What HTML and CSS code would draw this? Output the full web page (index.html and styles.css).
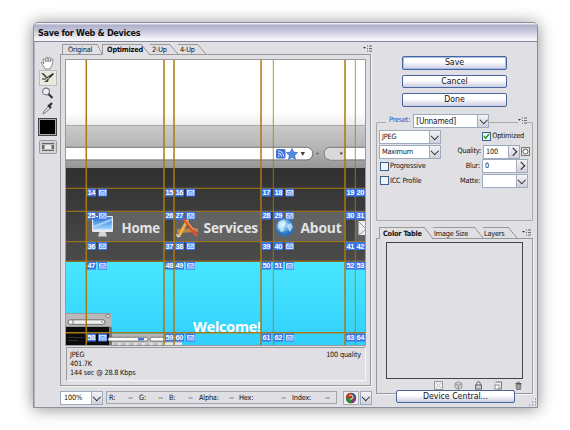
FILE: index.html
```html
<!DOCTYPE html>
<html lang="en">
<head>
  <meta charset="UTF-8" />
  <title>Save for Web &amp; Devices</title>
  <link rel="stylesheet" href="styles.css">
</head>
<body>

<div class="window">
  <div class="titlebar">Save for Web &amp; Devices</div>

  <div class="content">
    <!-- Toolbox -->
    <div class="tools">
      <svg class="tool" width="16" height="14" viewBox="0 0 16 14"><path d="M5 13L3 9 1 7q0-1 1.500-.5L4 8 3 3q1-1 2 .5L6 6 6 1.500q1-1 1.700 0L8 6 9 1.500q1-.8 1.600.3L10 6 12 3q1.400-.3 1 1L12 9l-2 4z" fill="#fff" stroke="#777" stroke-width=".8"/></svg>
      <svg class="tool active" width="16" height="14" viewBox="0 0 16 14"><path d="M1 2l3 .5L7 6l6-4 1 1-5 4-1 4H4l3-3z" fill="#444"/><path d="M2 8h4M9 7l4-4" stroke="#222" stroke-width="1.200"/><path d="M5 10l4-4" stroke="#eee" stroke-width=".8"/></svg>
      <svg class="tool" width="16" height="14" viewBox="0 0 16 14"><circle cx="6" cy="5.500" r="3.400" fill="#eef" stroke="#777" stroke-width="1.100"/><path d="M8.500 8l4 4" stroke="#333" stroke-width="2.200"/></svg>
      <svg class="tool" width="16" height="14" viewBox="0 0 16 14"><path d="M3 13l1-3 5-5 2 2-5 4z" fill="#ddd" stroke="#666" stroke-width=".8"/><path d="M8 4l3 3M9 5l3-3" stroke="#333" stroke-width="2.400"/></svg>
      <div class="swatch"></div>
      <svg class="slice-toggle" width="18" height="14" viewBox="0 0 18 14"><rect x=".5" y=".5" width="17" height="13" rx="1" fill="#d2d2d2" stroke="#999"/><rect x="3" y="3" width="12" height="8" fill="#666"/><rect x="5.500" y="5" width="7" height="4" fill="#eee"/><path d="M3 4.500h12M3 9.500h12" stroke="#ddd" stroke-width=".7"/></svg>
    </div>

    <!-- Preview -->
    <div class="preview">
      <div class="tabs">
        <span class="tab tab-original">Original</span>
        <span class="tab tab-optimized selected">Optimized</span>
        <span class="tab tab-up">2-Up</span>
        <span class="tab tab-up">4-Up</span>
        <svg class="menu-icon" width="9" height="7" viewBox="0 0 9 7"><path d="M0 2h3L1.500 3.800z" fill="#333"/><path d="M4 1h1M6 1h3M4 3.500h1M6 3.500h3M4 6h1M6 6h3" stroke="#666"/></svg>
      </div>
      <div class="preview-panel">
        <svg class="canvas" width="299" height="285" viewBox="66 60 299 285">
          <defs>
            <linearGradient id="fade" x2="0" y2="1"><stop stop-color="#fff"/><stop offset="1" stop-color="#ececec"/></linearGradient>
            <linearGradient id="chrome" x2="0" y2="1"><stop stop-color="#cacaca"/><stop offset=".5" stop-color="#b5b5b5"/><stop offset="1" stop-color="#969696"/></linearGradient>
            <linearGradient id="dark" x2="0" y2="1"><stop stop-color="#303030"/><stop offset="1" stop-color="#4b4b4b"/></linearGradient>
            <linearGradient id="cyan" x2="0" y2="1"><stop stop-color="#48e6ff"/><stop offset="1" stop-color="#32cffc"/></linearGradient>
            <linearGradient id="screen" x2="0" y2="1"><stop stop-color="#276fd1"/><stop offset="1" stop-color="#9bd6ff"/></linearGradient>
            <radialGradient id="globe" cx=".4" cy=".35"><stop stop-color="#e5f7ff"/><stop offset=".5" stop-color="#75bdec"/><stop offset="1" stop-color="#2474bd"/></radialGradient>
            <g id="slice-icon"><rect width="9" height="8" fill="#3b74e8"/><rect x="1.500" y="2" width="6.500" height="4.500" fill="#6d9bf5" stroke="#dce8ff" stroke-width=".9"/><path d="M2 3l2.500 2L7.500 3" fill="none" stroke="#fff" stroke-width=".8"/></g>
          </defs>

          <!-- browser chrome -->
          <rect x="66" y="60" width="299" height="285" fill="#fff"/>
          <rect x="66" y="112" width="299" height="14" fill="url(#fade)"/>
          <rect x="66" y="126" width="299" height="42" fill="url(#chrome)"/>
          <path d="M66 125.500h299" stroke="#aaa"/>
          <path d="M60 147.300h246.500a6.300 6.300 0 0 1 0 12.600H60z" fill="#fff" stroke="#666" stroke-width=".9"/>
          <path d="M370 147.300h-39.500a6.300 6.300 0 0 0 0 12.600H370z" fill="#fff" stroke="#666" stroke-width=".9"/>
          <path d="M330.500 148h14.500v11.500h-14.500a5.700 5.700 0 0 1 0-11.500z" fill="#d9d9d9"/>
          <rect x="276" y="149" width="9.500" height="9.500" rx="1.500" fill="#4470dc"/>
          <path d="M278 153a3.500 3.500 0 0 1 3.500 3.500M278 150.800a5.700 5.700 0 0 1 5.700 5.700" fill="none" stroke="#dfe9ff" stroke-width="1"/>
          <circle cx="278.800" cy="155.900" r=".8" fill="#dfe9ff"/>
          <path d="M292 148.500l1.700 3.600 4 .5-3 2.800.8 4-3.500-2-3.500 2 .8-4-3-2.800 4-.5z" fill="#4f8be0" stroke="#2b62c2" stroke-width=".6"/>
          <path d="M300.500 152h4.500l-2.250 4zM339.500 152.500h3.500l-1.750 2.500z" fill="#444"/>
          <circle cx="317.500" cy="153.500" r=".9" fill="#555"/>

          <!-- navigation -->
          <rect x="66" y="168" width="299" height="94" fill="url(#dark)"/>
          <path d="M86 211.500h78v30H86zM174 211.500h87v30h-87zM273 211.500h72v30h-72zM355 211.500h10v30h-10z" fill="#626262"/>
          <g>
            <rect x="92" y="216" width="21" height="16" rx="1" fill="#e6e9ed"/>
            <rect x="93.200" y="217.200" width="18.600" height="12" fill="url(#screen)"/>
            <path d="M93.200 226l18.600-8v3l-18.600 7z" fill="#c7e8ff" opacity=".6"/>
            <path d="M99.500 232h6l1.500 4.500h-9z" fill="#d2d5d9"/>
          </g>
          <g fill="none">
            <path d="M177 231l21-1" stroke="#bd8443" stroke-width="4"/>
            <path d="M179 236l9-17" stroke="#e7b14b" stroke-width="3"/>
            <path d="M184 219l13 17" stroke="#dc5130" stroke-width="3"/>
            <path d="M186 220l8 10" stroke="#f6c18c" stroke-width="1"/>
            <path d="M177 234q0 4 3 2" stroke="#ddd" stroke-width="1.500"/>
          </g>
          <circle cx="285" cy="227.500" r="9" fill="url(#globe)"/>
          <path d="M279 222l5-2 2 3-3 4 1 4-3 1-3-5zM287 225l4-2 2 4-3 5-2-3z" fill="#e3f6ff" opacity=".65"/>
          <rect x="358.500" y="221" width="11" height="14" fill="#eee"/>
          <path d="M359 222l7 7-7 6" fill="none" stroke="#999"/>
          <g class="nav-text">
            <text x="121.500" y="232.500" textLength="38.500" lengthAdjust="spacingAndGlyphs">Home</text>
            <text x="203.500" y="232.500" textLength="54.500" lengthAdjust="spacingAndGlyphs">Services</text>
            <text x="300.500" y="232.500" textLength="41" lengthAdjust="spacingAndGlyphs">About</text>
          </g>

          <!-- page body -->
          <rect x="66" y="262" width="299" height="83" fill="url(#cyan)"/>
          <text class="welcome" x="193" y="332.200" textLength="68" lengthAdjust="spacingAndGlyphs">Welcome!</text>
          <rect x="66" y="313" width="45.500" height="14" fill="#b9b9b9"/>
          <path d="M66 313.500h45M66 326.500h45" stroke="#999"/>
          <rect x="68" y="319.800" width="37" height="4.600" rx="2.300" fill="#eee" stroke="#555" stroke-width=".8"/>
          <path d="M73 320v4M101 321l2 2" stroke="#555" stroke-width=".7"/>
          <ellipse cx="108" cy="316" rx="2.600" ry="1.500" fill="#ddd" stroke="#666" stroke-width=".7"/>
          <rect x="66" y="327" width="43" height="18" fill="#0b0b0b"/>
          <rect x="109" y="327" width="3" height="18" fill="#777"/>
          <path d="M68 337.500h16M68 340.500h10" stroke="#333" stroke-width="1.200"/>
          <rect x="112" y="334" width="70" height="9" fill="#b4b4b4"/>
          <rect x="112" y="342.500" width="70" height="2.500" fill="#e5e5e5"/>
          <rect x="108" y="337.300" width="40" height="3.800" rx="1.900" fill="#fff" stroke="#555" stroke-width=".7"/>
          <rect x="150" y="337.300" width="20" height="3.800" rx="1.900" fill="#fff" stroke="#555" stroke-width=".7"/>
          <path d="M138 339.200h6" stroke="#456fdb" stroke-width="2.400"/>
          <path d="M113 344h50" stroke="#888" stroke-width=".8" stroke-dasharray="5 3"/>

          <!-- slice guides -->
          <g stroke="#a87a14" fill="none">
            <path d="M86.300 60v285M164 60v285M174 60v285M261 60v285M345 60v285" stroke-width="1.500"/>
            <path d="M273.300 60v285M355.300 60v285" stroke-width="1" opacity=".8"/>
            <path d="M66 188.300h299M66 211.300h299M66 241.700h299M66 261.200h299" stroke-width="1"/>
            <path d="M66 332.700h299" stroke-width="1.500"/>
          </g>
          <g id="slices"></g>
        </svg>
        <div class="info">
          <div>JPEG<br>401.7K<br>144 sec @ 28.8 Kbps</div>
          <div>100 quality</div>
        </div>
      </div>
      <div class="status">
        <div class="select zoom"><span>100%</span><i class="arrow"></i></div>
        <div class="readout">
          <span class="r-short">R:<b>--</b></span>
          <span class="r-short">G:<b>--</b></span>
          <span class="r-short">B:<b>--</b></span>
          <span class="r-alpha">Alpha:<b>--</b></span>
          <span class="r-hex">Hex:<b>--</b></span>
          <span class="r-index">Index:<b>--</b></span>
        </div>
        <div class="browser">
          <svg width="12" height="12" viewBox="0 0 12 12"><circle cx="6" cy="6" r="5.200" fill="#333"/><path d="M6 6V1a5 5 0 0 0-5 5z" fill="#b8332a"/><path d="M6 6H1a5 5 0 0 0 5 5z" fill="#2f8a3b"/><path d="M6 6v5a5 5 0 0 0 5-5z" fill="#843c80"/><path d="M6 6h5a5 5 0 0 0-5-5z" fill="#3355ad"/><path d="M4 4q2-2 3.500 0T6 7v1" fill="none" stroke="#f2dd5c" stroke-width="1.200"/></svg>
        </div>
        <div class="select drop"><i class="arrow"></i></div>
      </div>
    </div>

    <!-- Settings -->
    <div class="side">
      <div class="buttons">
        <button class="btn primary">Save</button>
        <button class="btn">Cancel</button>
        <button class="btn">Done</button>
      </div>

      <div class="settings">
        <div class="preset">
          <label>Preset:</label>
          <div class="select preset-select"><span>[Unnamed]</span><i class="arrow"></i></div>
          <svg class="menu-icon" width="9" height="7" viewBox="0 0 9 7"><path d="M0 2h3L1.500 3.800z" fill="#333"/><path d="M4 1h1M6 1h3M4 3.500h1M6 3.500h3M4 6h1M6 6h3" stroke="#666"/></svg>
        </div>
        <div class="row">
          <div class="select format"><span>JPEG</span><i class="arrow"></i></div>
          <div class="check optimized"><i class="box"><svg width="7" height="7" viewBox="0 0 7 7"><path d="M1 3l1.700 2.200L6 1" fill="none" stroke="#22a022" stroke-width="1.500"/></svg></i>Optimized</div>
        </div>
        <div class="row">
          <div class="select format"><span>Maximum</span><i class="arrow"></i></div>
          <label>Quality:</label>
          <div class="select quality"><span>100</span><i class="arrow right"></i></div>
          <svg class="mask" width="9" height="9" viewBox="0 0 9 9"><rect x=".5" y=".5" width="8" height="8" fill="#eee" stroke="#777"/><circle cx="4.500" cy="4.500" r="2.500" fill="#fff" stroke="#555"/></svg>
        </div>
        <div class="row">
          <div class="check"><i class="box"></i>Progressive</div>
          <label>Blur:</label>
          <div class="select value"><span>0</span><i class="arrow right"></i></div>
        </div>
        <div class="row">
          <div class="check"><i class="box"></i>ICC Profile</div>
          <label>Matte:</label>
          <div class="select value"><span></span><i class="arrow"></i></div>
        </div>
      </div>

      <div class="tabs side-tabs">
        <span class="tab tab-color selected">Color Table</span>
        <span class="tab tab-size">Image Size</span>
        <span class="tab tab-layers">Layers</span>
        <svg class="menu-icon" width="9" height="7" viewBox="0 0 9 7"><path d="M0 2h3L1.500 3.800z" fill="#333"/><path d="M4 1h1M6 1h3M4 3.500h1M6 3.500h3M4 6h1M6 6h3" stroke="#666"/></svg>
      </div>
      <div class="color-panel">
        <div class="color-table"></div>
        <div class="color-tools">
          <svg width="9" height="9" viewBox="0 0 9 9"><rect x=".5" y=".5" width="8" height="8" fill="#eee" stroke="#999"/><path d="M2 2l5 5M7 2L2 7" stroke="#aaa" stroke-dasharray="1 1"/></svg>
          <svg width="9" height="9" viewBox="0 0 9 9"><path d="M4.500.5l3.500 2v4l-3.500 2-3.500-2v-4z" fill="#ccc" stroke="#888" stroke-width=".8"/><path d="M1 2.500l3.500 2 3.500-2M4.500 4.500v4" fill="none" stroke="#888" stroke-width=".8"/></svg>
          <svg width="9" height="9" viewBox="0 0 9 9"><path d="M2.700 4V2.500a1.800 1.800 0 0 1 3.600 0V4" fill="none" stroke="#666"/><rect x="1.500" y="4" width="6" height="4" fill="#ccc" stroke="#666"/></svg>
          <svg width="9" height="9" viewBox="0 0 9 9"><path d="M1.500 1h6v7H4" fill="#eee" stroke="#777"/><rect x="1" y="4" width="4" height="4" fill="#fff" stroke="#777" stroke-width=".8"/></svg>
          <svg width="9" height="9" viewBox="0 0 9 9"><path d="M1.500 2.500h6M3.500 1.200h2" stroke="#555"/><path d="M2 3.500h5l-.5 5h-4z" fill="#bbb" stroke="#666" stroke-width=".8"/><path d="M3.700 4v4M5.300 4v4" stroke="#666" stroke-width=".6"/></svg>
        </div>
      </div>
      <button class="btn device">Device Central...</button>
    </div>
  </div>
  <svg class="grip" width="9" height="9" viewBox="0 0 9 9"><path d="M7 1h1M4 4h1M7 4h1M1 7h1M4 7h1M7 7h1" stroke="#999" stroke-width="1.300"/></svg>
</div>

<script>
  // slice number badges: [x, has icon] for every column, first number and y for every row
  const columns = [[87, true], [165, false], [175, true], [262, false], [274, true], [346, false], [356, false]];
  const rows = [[14, 188.5], [25, 211.6], [36, 242], [47, 261.600], [58, 333.500]];
  let badges = '';
  rows.forEach(([first, y]) => {
    columns.forEach(([x, icon], i) => {
      badges += `<rect x="${x}" y="${y}" width="9" height="8" fill="#3b74e8"/>`;
      badges += `<text class="badge" x="${x + 0.4}" y="${y + 6.7}" textLength="7.800" lengthAdjust="spacingAndGlyphs">${first + i}</text>`;
      if (icon) badges += `<use href="#slice-icon" x="${x + 11}" y="${y}"/>`;
    });
  });
  document.getElementById('slices').innerHTML = badges;
</script>

</body>
</html>
```
FILE: styles.css
```css
* {
  box-sizing: border-box;
}

body {
  margin: 0;
  padding: 22px 32px 22px 33px;
  background: #fff;
  font-family: "DejaVu Sans Condensed", "DejaVu Sans", sans-serif;
  font-stretch: condensed;
  font-size: 7.3px;
  line-height: 8.8px;
  letter-spacing: -0.2px;
  color: #111;
  overflow: hidden;
}

.window {
  position: relative;
  width: 505px;
  height: 386px;
  background: #dfdfe4;
  border: 1px solid #8c8c9b;
  border-radius: 5px 5px 0 0;
  box-shadow: 0 1px 16px rgba(0,0,0,0.45);
}

.titlebar {
  height: 19px;
  padding-left: 4px;
  border-bottom: 1px solid #85859a;
  border-radius: 4px 4px 0 0;
  background: linear-gradient(#fff 0, #b0b0cc 12%, #bfbfd6 35%, #f4f4fa 90%);
  font-size: 9px;
  line-height: 20px;
  font-weight: bold;
  letter-spacing: -0.3px;
}

.content {
  display: flex;
  height: 365px;
  border-left: 1px solid #b4b4c4;
}

.tools {
  width: 25px;
  padding-top: 14px;
  display: flex;
  flex-direction: column;
  align-items: center;
}

.tool {
  margin-bottom: 1px;
}

.tool.active {
  background: #e9e9dd;
  outline: 1px solid #bbb;
}

.swatch {
  width: 19px;
  height: 18px;
  margin: 2px 0 4px;
  background: #000;
  border: 1px solid #444;
  box-shadow: inset 0 0 0 1px #aaa;
}

.preview {
  width: 312px;
  padding-top: 2px;
}

.tabs {
  display: flex;
  height: 10px;
  padding-left: 2px;
}

.tab {
  position: relative;
  height: 10px;
  padding-left: 5px;
  border: 1px solid #999;
  border-width: 1px 0 0 1px;
  line-height: 10px;
}

/* slanted right edge */
.tab::after {
  content: "";
  position: absolute;
  top: -1px;
  right: 0;
  bottom: 0;
  width: 9px;
  background: linear-gradient(to top right, transparent calc(50% - 0.6px), #888 50%, #dfdfe4 calc(50% + 0.7px));
}

.selected {
  height: 11px;
  background-color: #dfdfe4;
  font-weight: bold;
  z-index: 1;
}

.tab-original { width: 40px; }
.tab-original::after { width: 5px; }
.tab-optimized { width: 48px; padding-left: 4px; }
.tab-up { width: 28px; padding-left: 2px; border-left: 0; }

.menu-icon {
  margin: 1px 0 0 auto;
}

.preview-panel {
  width: 311px;
  height: 332px;
  padding: 5px;
  border: 1px solid #999;
}

.tabs + .preview-panel, .color-panel {
  box-shadow: 1px 1px 0 #f4f4f4;
}

.canvas {
  display: block;
  outline: 1px solid #999;
}

.nav-text {
  font: bold 15px "Open Sans", sans-serif;
  fill: #e4e4e4;
}

.welcome {
  font: bold 15px "Open Sans", sans-serif;
  fill: #fff;
}

.badge {
  font: bold 7px "Liberation Sans", sans-serif;
  fill: #fff;
}

.info {
  display: flex;
  justify-content: space-between;
  width: 300px;
  height: 34px;
  margin-top: 2px;
  padding: 3px 4px 0 3px;
  border: 1px solid;
  border-color: #999 #f8f8f8 #f8f8f8 #999;
}

.status {
  display: flex;
  margin-top: 5px;
}

.select {
  display: flex;
  height: 14px;
  background: #fff;
  border: 1px solid #9da9bd;
  line-height: 12px;
}

.select span {
  flex: 1;
  padding-left: 2px;
}

.arrow {
  display: flex;
  align-items: center;
  justify-content: center;
  width: 11px;
  background: linear-gradient(#f3f3f8, #cfd0dc);
  border-left: 1px solid #aaaabb;
}

.arrow::after {
  content: "";
  width: 4.5px;
  height: 4.5px;
  margin-top: -2px;
  border: solid #222;
  border-width: 0 1.5px 1.5px 0;
  transform: rotate(45deg);
}

.arrow.right::after {
  margin: 0 0 0 -2px;
  transform: rotate(-45deg);
}

.zoom { width: 43px; }
.zoom span { padding-left: 3px; }

.readout {
  display: flex;
  flex: none;
  width: 231px;
  height: 13px;
  margin-left: 3px;
  padding-left: 2px;
  border: 1px solid #a5a5ad;
  line-height: 12px;
}

.readout span {
  display: flex;
  justify-content: space-between;
}

.readout b {
  font-weight: normal;
  letter-spacing: 0;
}

.r-short { width: 24px; margin-right: 6px; }
.r-alpha { width: 35px; margin-right: 5px; }
.r-hex { width: 47px; margin-right: 6px; }
.r-index { width: 38px; }

.browser {
  flex: none;
  width: 16px;
  height: 14px;
  margin-left: 6px;
  padding: 0 1px;
  background: #eee;
  border: 1px solid #aaa;
}

.drop { margin-left: 1px; }
.drop .arrow { border: 0; width: 10px; }

.side {
  display: flex;
  flex-direction: column;
  width: 157px;
  margin-left: 4px;
}

.buttons {
  display: flex;
  flex-direction: column;
  align-items: center;
  gap: 5px;
  padding-top: 14px;
}

.btn {
  width: 105px;
  height: 13.5px;
  padding: 0;
  border: 1px solid #48659c;
  border-radius: 2px;
  background: linear-gradient(#fff 40%, #cacce2);
  font: inherit;
  font-size: 8.7px;
  line-height: 11px;
  color: #111;
}

.primary {
  box-shadow: inset 0 0 0 1px #a5bce8;
}

.settings {
  height: 99px;
  margin-top: 15px;
  padding: 0 2px;
  border: 1px solid #aaa;
  border-radius: 1px;
}

.preset {
  display: flex;
  align-items: center;
  height: 14px;
  margin: -9px 3px 0 7px;
}

.preset label {
  padding: 0 3px;
  color: #2455c8;
  background: #dfdfe4;
}

.preset-select {
  width: 76px;
  font-size: 8.2px;
}

.preset .menu-icon {
  margin-top: 0;
  background: #dfdfe4;
}

.row {
  display: flex;
  align-items: center;
  height: 14.7px;
}

.settings .preset + .row {
  margin-top: 2px;
}

.format { width: 62px; }
.quality { width: 37px; }
.value { width: 46px; margin-right: 2px; }

.row .select { flex: none; }

.row label {
  margin-left: auto;
  padding-right: 2px;
}

.mask {
  margin-left: 1px;
}

.check {
  display: flex;
  align-items: center;
  gap: 1px;
  padding-left: 1px;
}

.box {
  width: 9px;
  height: 9px;
  background: #eff6fb;
  border: 1px solid #3d6088;
}

.box svg {
  display: block;
}

.optimized {
  margin-left: auto;
  margin-right: 6px;
}

.side-tabs {
  height: 11px;
  margin-top: 6px;
  padding-left: 3px;
}

.side-tabs .tab { height: 11px; line-height: 12px; }
.side-tabs .selected { height: 12px; }
.side-tabs .menu-icon { margin: 2px 2px 0 auto; }

.tab-color { width: 54px; padding-left: 3px; }
.tab-size { width: 50px; padding-left: 1px; border-left: 0; }
.tab-layers { width: 34px; padding-left: 1px; border-left: 0; }

.color-panel {
  height: 156px;
  padding: 3px 9px 0;
  border: 1px solid #999;
}

.color-table {
  height: 137px;
  border: 1px solid #444;
}

.color-tools {
  display: flex;
  justify-content: flex-end;
  gap: 11px;
  margin-top: 2px;
}

.device {
  flex: none;
  width: 119px;
  margin: -4px 0 0 20px;
}

.grip {
  position: absolute;
  right: 0;
  bottom: 0;
}
```
